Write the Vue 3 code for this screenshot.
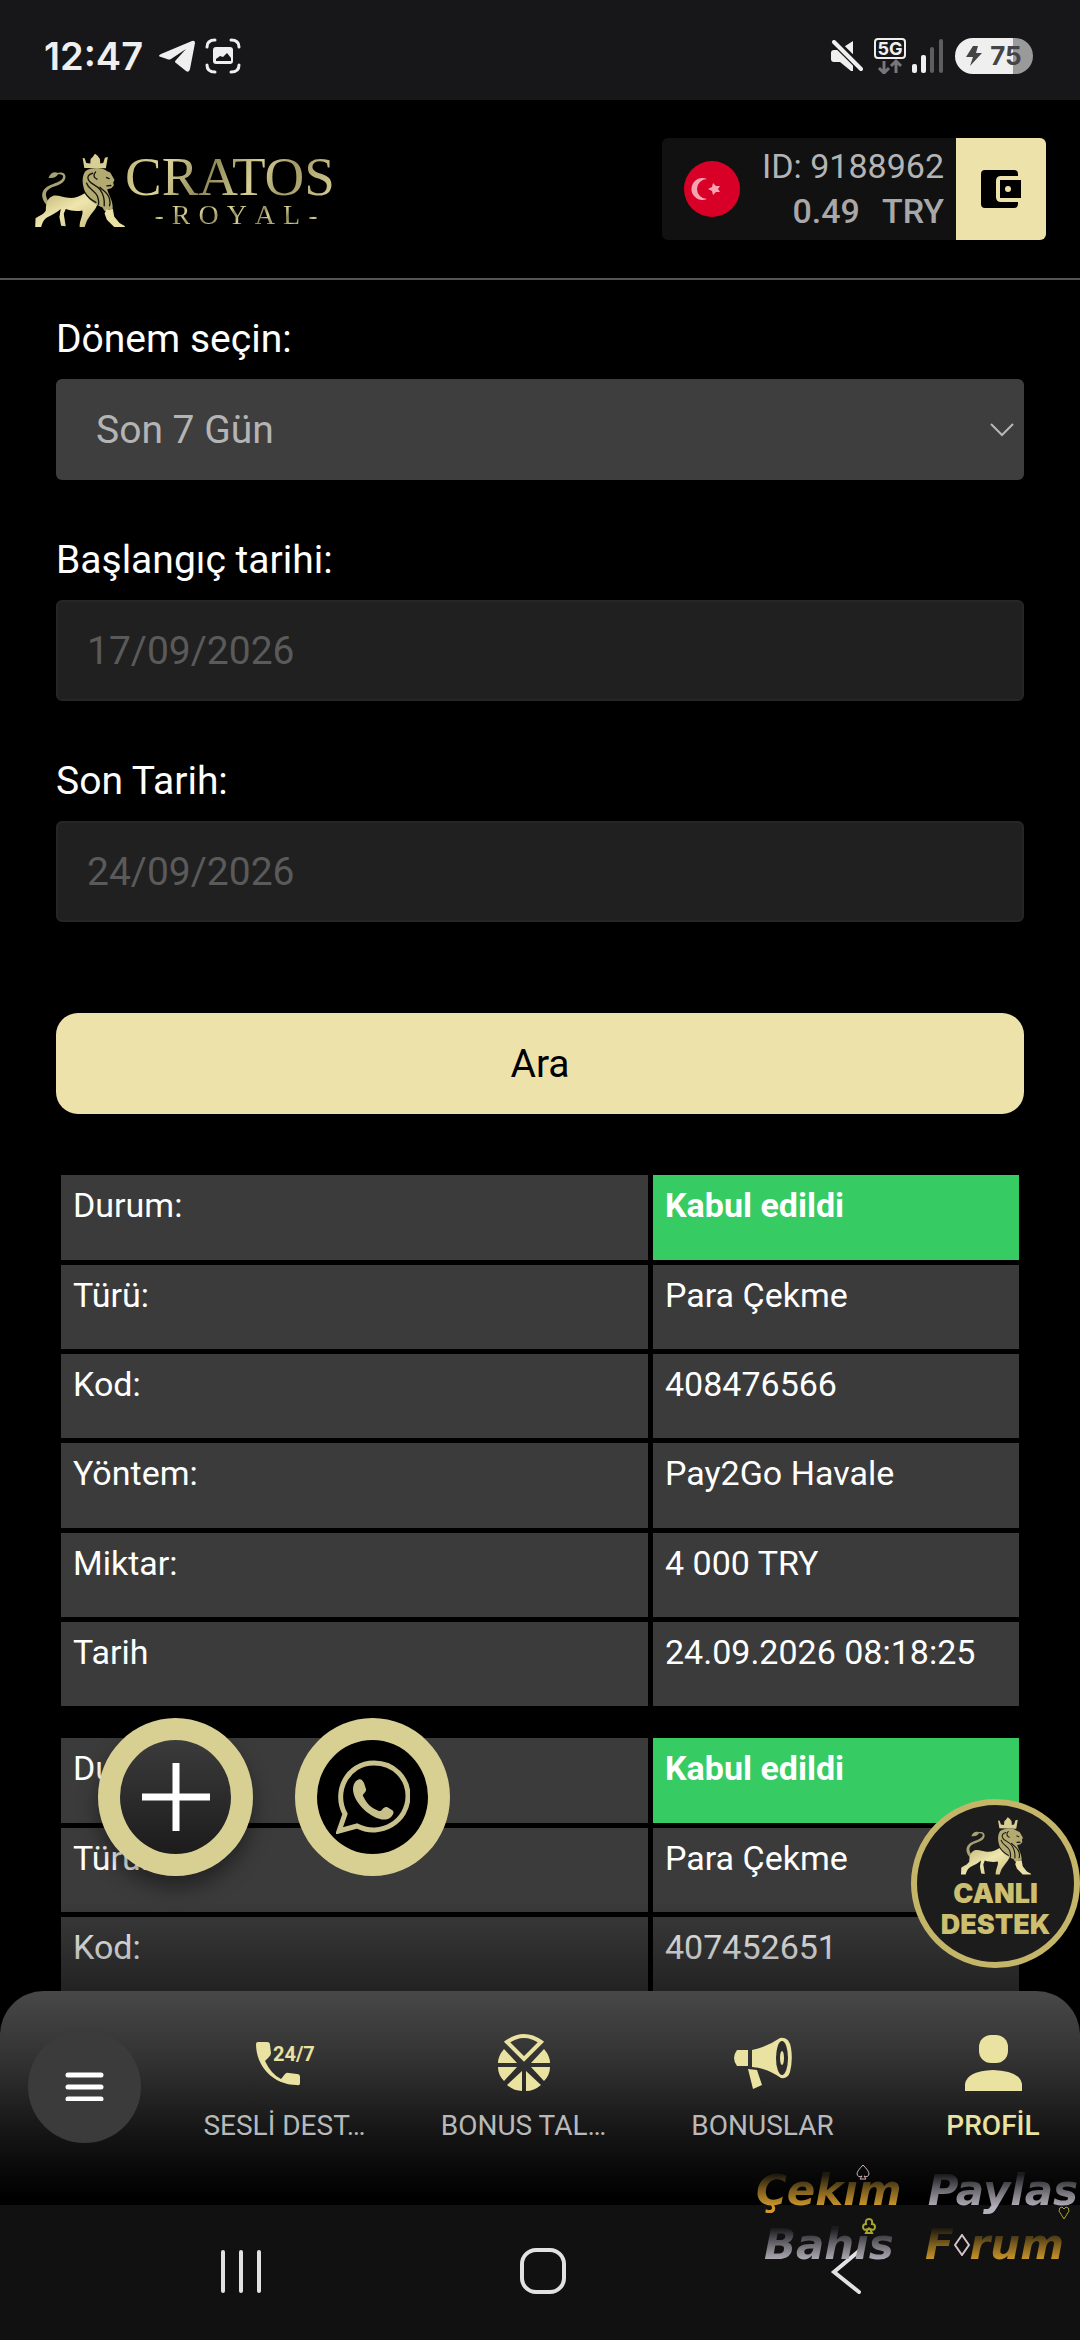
<template>
    <div class="page">
        <svg class="defs" aria-hidden="true">
            <defs>
                <symbol id="lion" viewBox="15 20 270 220">
                    <path d="M52 176c-12-10-20-28-14-42 7-18 28-22 44-29 10-4 17-10 17-17 0-6-7-7-15-7-5 8-13 13-29 11 5-14 16-20 29-15 14-4 24 3 22 15-3 16-22 21-36 27-16 6-25 15-22 28 2 9 6 16 12 21z" fill="#a8a174" />
                    <path d="M15 240l1-26c9-8 22-9 31-24 0-20 4-36 19-43 15-5 30 3 48 5 18 2 33-3 50-14l38 34c-4 15-16 24-25 39-7 9-10 20-13 29H149c-2-17 12-38 8-50-15 3-34 2-50-4l-6 14 6 38-14-2-5-26 4-24c-10 10-25 17-39 24-10 6-15 13-20 30z" fill="url(#gold)" />
                    <path d="M163 62l-5-30 6 1 5 14 12 2 1-14 7-7 6-9 8 6 7 10 1 14 9-2 5-16 9-2-6 34z" fill="#d9cf94" />
                    <path d="M166 72c16-12 50-14 66 0l9 4 13 22-4 8 2 9-8 8-12 3c4 18 20 38 16 61l-12-1-2 9-11-5-5-9c-22-8-46-22-53-48-8-20-11-43 1-61z" fill="#b3aa72" />
                    <path d="M229 188l20-2 4 22 16 20 16 9v3h-32l-22-22-7-19z" fill="#ebe1a5" />
                    <g fill="none" stroke="#14130d" stroke-width="4" stroke-linecap="round">
                        <path d="M188 78c-14 3-17 12-12 21 6 12 22 12 35 29 10 14 14 27 12 48" />
                        <path d="M170 108c6 19 25 21 33 40 3 9 4 17 3 25M210 120c9 10 25 17 29 35 2 9 2 15 0 21M197 74c-8 9-6 18 4 22M231 116l12-1M230 91l8 3M166 138c7 12 17 20 32 28" />
                    </g>
                </symbol>
                <linearGradient id="gold" x1="0" y1="0" x2="1" y2="1">
                    <stop offset="0" stop-color="#bcb273" />
                    <stop offset=".5" stop-color="#efe6ae" />
                    <stop offset="1" stop-color="#c9bf82" />
                </linearGradient>
            </defs>
        </svg>

        <div class="status-bar">
            <span class="clock">12:47</span>
            <svg class="status-telegram" viewBox="0 0 36 32" width="36" height="32">
                <path d="M2 14 33 1q3-1 3 2l-5 26q-1 4-4 2l-10-8q-2-1 0-3l10-11-15 10q-2 1-4 0l-6-2q-4-1 0-3z" fill="#efefef" />
            </svg>
            <svg viewBox="0 0 36 36" width="36" height="36">
                <g fill="none" stroke="#efefef" stroke-width="3" stroke-linecap="round">
                    <path d="M2 9q0-7 8-7M26 2q8 0 8 7M34 27q0 7-8 7M10 34q-8 0-8-7" />
                </g>
                <path d="M11 9h14q3 0 3 3v11q0 3-3 3H11q-3 0-3-3V12q0-3 3-3z" fill="#efefef" />
                <path d="M11 23v-2l4-3 3 1 4-4 4 5v3z" fill="#17171a" />
            </svg>
            <div class="status-right">
                <svg viewBox="0 0 32 32" width="32" height="32">
                    <path d="M3 10h5L22 1v30h-2L9 22H3q-3 0-3-3v-6q0-3 3-3z" fill="#efefef" />
                    <path d="M2 0 34 32" stroke="#17171a" stroke-width="8" />
                    <path d="M3 2 30 29" stroke="#efefef" stroke-width="4" stroke-linecap="round" />
                </svg>
                <div class="network">
                    <svg viewBox="0 0 32 36" width="32" height="36">
                        <rect x="1" y="1" width="30" height="19" rx="3" fill="none" stroke="#efefef" stroke-width="2" />
                        <text x="16" y="17" text-anchor="middle" class="net-text">5G</text>
                        <path d="M10 23v12M5 30l5 5 5-5M22 35V23M17 28l5-5 5 5" fill="none" stroke="#77777a" stroke-width="3" />
                    </svg>
                    <svg viewBox="0 0 32 34" width="32" height="34">
                        <rect x="0" y="25" width="5" height="9" rx="2" fill="#efefef" />
                        <rect x="9" y="16" width="5" height="18" rx="2" fill="#efefef" />
                        <rect x="18" y="8" width="4" height="26" rx="2" fill="#5e5e61" />
                        <rect x="27" y="0" width="4" height="34" rx="2" fill="#5e5e61" />
                    </svg>
                </div>
                <div class="battery">
                    <svg viewBox="0 0 16 20" width="16" height="20">
                        <path d="M7 0h5l-2 7h6L4 20l3-9H0z" fill="#444446" />
                    </svg>
                    <span>75</span>
                </div>
            </div>
        </div>

        <header class="header">
            <a href="#" class="logo" aria-label="Cratos Royal">
                <svg class="logo-lion" width="90" height="73"><use href="#lion" /></svg>
                <span class="logo-text">
                    <span class="logo-main">CRATOS</span>
                    <span class="logo-sub"><span v-for="(ch, i) in '-ROYAL-'" :key="i">{{ ch }}</span></span>
                </span>
            </a>
            <div class="account">
                <svg class="flag" viewBox="0 0 56 56" width="56" height="56">
                    <circle cx="28" cy="28" r="28" fill="#d80027" />
                    <path d="M23 18a11 11 0 1 0 0 20 10 10 0 0 1 0-20z" fill="#f6a3b2" />
                    <path d="m24 28 4-2 1-4 3 3 4 0-2 3 2 3-4 0-3 3-1-4z" fill="#f6a3b2" />
                </svg>
                <div class="account-info">
                    <span>ID: 9188962</span>
                    <span class="balance"><span>0.49</span><span>TRY</span></span>
                </div>
                <button type="button" class="wallet" aria-label="Cüzdan">
                    <svg viewBox="0 0 40 38" width="40" height="38">
                        <path d="M4 0h29q4 0 4 4v2H20q-5 0-5 5v16q0 5 5 5h17v2q0 4-4 4H4q-4 0-4-4V4q0-4 4-4z" />
                        <path d="M19 10h21v18H19z" />
                        <circle cx="27" cy="19" r="3" fill="#ede3aa" />
                    </svg>
                </button>
            </div>
        </header>

        <div class="body">
            <main class="content">
                <form @submit.prevent>
                    <div class="field">
                        <label for="period">Dönem seçin:</label>
                        <div class="select-wrap">
                            <select id="period" v-model="period">
                                <option>Son 7 Gün</option>
                            </select>
                            <svg class="arrow" viewBox="0 0 24 14" width="24" height="14">
                                <path d="m1 1 11 11L23 1" fill="none" stroke="#b8b8b8" stroke-width="2" />
                            </svg>
                        </div>
                    </div>
                    <div class="field">
                        <label for="from">Başlangıç tarihi:</label>
                        <input id="from" type="text" value="17/09/2026" disabled>
                    </div>
                    <div class="field">
                        <label for="to">Son Tarih:</label>
                        <input id="to" type="text" value="24/09/2026" disabled>
                    </div>
                    <button type="submit" class="search">Ara</button>
                </form>

                <table v-for="(item, i) in transactions" :key="i" class="record">
                    <tbody>
                        <tr v-for="row in item" :key="row.label">
                            <th scope="row">{{ row.label }}</th>
                            <td :class="{ accepted: row.accepted }">{{ row.value }}</td>
                        </tr>
                    </tbody>
                </table>
            </main>
            <div class="fade"></div>

            <div class="fabs">
                <button type="button" class="fab fab-plus" aria-label="Aç">
                    <svg viewBox="0 0 68 68" width="68" height="68">
                        <path d="M34 0v68M0 34h68" stroke="#fff" stroke-width="7" />
                    </svg>
                </button>
                <a href="#" class="fab fab-whatsapp" aria-label="WhatsApp">
                    <svg viewBox="0 0 74 74" width="74" height="74">
                        <path d="M3 71 9 54C-3 32 11 3 38 3c20 0 34 15 34 33 0 25-27 42-51 30z" fill="none" stroke="#c9c18b" stroke-width="5" />
                        <path d="M20 21c4-3 6-2 8 2l2 6c1 3-4 5-3 7 4 8 8 12 16 15 3 1 4-5 8-4l5 3c3 2 1 5-1 7-10 10-38-11-38-28 0-3 1-6 3-8z" fill="#c9c18b" />
                    </svg>
                </a>
            </div>

            <a href="#" class="support">
                <svg width="70" height="60"><use href="#lion" /></svg>
                <span>CANLI</span>
                <span>DESTEK</span>
            </a>
        </div>

        <nav class="tabbar">
            <button type="button" class="menu" aria-label="Menü">
                <svg viewBox="0 0 39 29" width="39" height="29">
                    <path d="M3 3h33M3 15h33M3 27h33" stroke="#fff" stroke-width="5" stroke-linecap="round" />
                </svg>
            </button>
            <div class="tabs">
                <a href="#" class="tab">
                    <svg viewBox="0 0 57 58" width="57" height="58">
                        <path d="M2 8h9q3 0 3 3l1 8q0 2-2 4l-4 4q6 13 16 18l4-5q2-2 4-1l8 1q3 0 3 3v6q0 3-3 2C17 51 0 32 0 10q0-2 2-2z" fill="#eae2a0" />
                        <text x="17" y="27" class="phone-text">24/7</text>
                    </svg>
                    <span>SESLİ DEST…</span>
                </a>
                <a href="#" class="tab">
                    <svg viewBox="0 0 52 58" width="52" height="58">
                        <path d="M9 8Q26-4 43 8L26 25z" fill="none" stroke="#eae2a0" stroke-width="4" />
                        <path d="M6 15 19 29H0Q0 22 6 15zM46 15Q52 22 52 29H33zM0 33h19L6 47Q0 41 0 33zM52 33q0 8-6 14L33 33zM24 37v20q-8 0-15-6zM28 37v20q8 0 15-6z" fill="#eae2a0" />
                    </svg>
                    <span>BONUS TAL…</span>
                </a>
                <a href="#" class="tab">
                    <svg viewBox="0 0 57 58" width="57" height="58">
                        <path d="M3 16h11v16H3q-6-8 0-16zM18 16Q33 13 46 4q9-2 11 10t-1 24q-2 7-9 6Q33 34 18 33z" fill="#eae2a0" />
                        <ellipse cx="48" cy="24" rx="6" ry="17" fill="#2c2c2c" />
                        <ellipse cx="48" cy="24" rx="2" ry="7" fill="#eae2a0" />
                        <path d="m14 35 9 1 5 15-9 4z" fill="#eae2a0" />
                    </svg>
                    <span>BONUSLAR</span>
                </a>
                <a href="#" class="tab active">
                    <svg viewBox="0 0 57 58" width="57" height="58">
                        <rect x="14" y="1" width="29" height="28" rx="12" fill="#eae2a0" />
                        <path d="M0 57v-7q2-13 28-14 27 1 29 14v7z" fill="#eae2a0" />
                    </svg>
                    <span>PROFİL</span>
                </a>
            </div>
        </nav>

        <div class="system-nav">
            <button type="button" aria-label="Son uygulamalar">
                <svg viewBox="0 0 46 46" width="46" height="46">
                    <path d="M5 4v39M23 4v39M41 4v39" stroke="#e2e2e2" stroke-width="4" stroke-linecap="round" />
                </svg>
            </button>
            <button type="button" aria-label="Ana ekran">
                <svg viewBox="0 0 46 46" width="46" height="46">
                    <rect x="2" y="2" width="42" height="42" rx="14" fill="none" stroke="#e2e2e2" stroke-width="4" />
                </svg>
            </button>
            <button type="button" aria-label="Geri">
                <svg viewBox="0 0 46 46" width="46" height="46">
                    <path d="M37 3 12 24l25 20" fill="none" stroke="#e2e2e2" stroke-width="4" stroke-linecap="round" />
                </svg>
            </button>
        </div>

        <div class="watermark">
            <div class="mark-line">
                <span class="mark gold">Çekım</span>
                <span class="mark silver">Paylas</span>
                <svg class="suit spade" viewBox="0 0 14 16" width="14" height="16">
                    <path d="M7 1Q1 7 1 10q1 4 5 2l-2 3h6l-2-3q4 2 5-2 0-3-6-9z" fill="none" stroke="#cdb5bd" />
                </svg>
                <svg class="suit heart" viewBox="0 0 12 14" width="12" height="14">
                    <path d="M6 13 1 5q0-4 3-4l2 2 2-2q3 0 3 4z" fill="none" stroke="#a7a52c" />
                </svg>
            </div>
            <div class="mark-line">
                <span class="mark silver">Bahıs</span>
                <span class="mark-forum">
                    <span class="mark gold">F</span>
                    <svg viewBox="0 0 16 22" width="16" height="22">
                        <path d="M8 1 15 11 8 21 1 11z" fill="none" stroke="#d4c3c8" stroke-width="2" />
                    </svg>
                    <span class="mark gold">rum</span>
                </span>
                <svg class="suit club" viewBox="0 0 14 16" width="14" height="16">
                    <path d="M6 11q-5 2-5-2 0-3 3-3-1-5 3-5t3 5q3 0 3 3 0 4-5 2l2 4H4z" fill="none" stroke="#a7a52c" stroke-width="2" />
                </svg>
            </div>
        </div>
    </div>
</template>

<script setup>
import { ref } from 'vue';

const period = ref('Son 7 Gün');

const transactions = [
    [
        { label: 'Durum:', value: 'Kabul edildi', accepted: true },
        { label: 'Türü:', value: 'Para Çekme' },
        { label: 'Kod:', value: '408476566' },
        { label: 'Yöntem:', value: 'Pay2Go Havale' },
        { label: 'Miktar:', value: '4 000 TRY' },
        { label: 'Tarih', value: '24.09.2026 08:18:25' }
    ],
    [
        { label: 'Durum:', value: 'Kabul edildi', accepted: true },
        { label: 'Türü:', value: 'Para Çekme' },
        { label: 'Kod:', value: '407452651' }
    ]
];
</script>

<style>
body {
    background: #000;
}
</style>

<style scoped>
.page {
    position: relative;
    display: flex;
    flex-direction: column;
    height: 100vh;
    overflow: hidden;
    background: #000;
    color: #fff;
    font-family: Roboto, "Noto Sans", sans-serif;
}

.page * {
    box-sizing: border-box;
}

svg {
    display: block;
    flex-shrink: 0;
}

button,
input,
select {
    margin: 0;
    padding: 0;
    border: 0;
    font-family: inherit;
}

a {
    color: inherit;
    text-decoration: none;
}

.defs {
    position: absolute;
    width: 0;
    height: 0;
}

/* status bar */
.status-bar {
    flex: none;
    display: flex;
    align-items: center;
    gap: 10px;
    height: 100px;
    padding: 12px 47px 0 44px;
    background: #17171a;
    color: #efefef;
}

.clock {
    margin-right: 6px;
    font: 600 38px/44px Inter, sans-serif;
}

.status-right {
    display: flex;
    align-items: center;
    gap: 11px;
    margin-left: auto;
}

.network {
    display: flex;
    align-items: center;
    gap: 6px;
}

.net-text {
    fill: #efefef;
    font: 700 18px Inter, sans-serif;
}

.battery {
    display: flex;
    align-items: center;
    justify-content: center;
    gap: 8px;
    width: 78px;
    height: 36px;
    border-radius: 18px;
    background: linear-gradient(90deg, #efefef 75%, #9a9a9b 75%);
    color: #444446;
    font: 700 26px/36px Inter, sans-serif;
}

/* header */
.header {
    flex: none;
    display: flex;
    align-items: center;
    justify-content: space-between;
    height: 180px;
    padding: 0 34px 0 35px;
    border-bottom: 2px solid #555;
}

.logo {
    display: flex;
    align-items: flex-end;
}

.logo-text {
    display: flex;
    flex-direction: column;
    align-items: center;
    font-family: "Liberation Serif", serif;
}

.logo-main,
.logo-sub span {
    background: linear-gradient(115deg, #bdb579, #ded59c 20%, #8f8857 40%, #d8cf97 60%, #a29a66 75%, #d8cf97);
    background-clip: text;
    color: transparent;
}

.logo-main {
    font-size: 55px;
    line-height: 52px;
}

.logo-sub {
    display: flex;
    gap: 8px;
    padding-left: 12px;
    font-size: 28px;
    line-height: 24px;
}

.account {
    display: flex;
    align-items: center;
    height: 102px;
    border-radius: 6px;
    overflow: hidden;
    background: #111;
}

.flag {
    margin: 0 22px;
}

.account-info {
    display: flex;
    flex-direction: column;
    align-items: flex-end;
    margin-right: 12px;
    color: #b4b4b4;
    font-size: 34px;
    line-height: 45px;
}

.balance {
    display: flex;
    gap: 22px;
    color: #a8a8a8;
    font-weight: 500;
}

.wallet {
    display: flex;
    align-items: center;
    justify-content: center;
    width: 90px;
    height: 102px;
    background: #ede3aa;
}

/* content */
.body {
    position: relative;
    flex: 1;
    min-height: 0;
}

.content {
    height: 100%;
    padding: 35px 56px 0;
    overflow: hidden;
}

.field {
    display: flex;
    flex-direction: column;
    gap: 16px;
    margin-bottom: 56px;
}

label {
    font-size: 39px;
    line-height: 48px;
}

.select-wrap {
    position: relative;
}

select,
input {
    width: 100%;
    height: 101px;
    border-radius: 6px;
    font-size: 39px;
}

select {
    display: block;
    padding: 0 40px;
    appearance: none;
    background: #3e3e3e;
    color: #b4b4b4;
}

.arrow {
    position: absolute;
    top: 44px;
    right: 10px;
    pointer-events: none;
}

input {
    padding: 0 29px;
    border: 2px solid #262626;
    background: #202020;
    color: #5a5a5a;
    opacity: 1;
}

.search {
    display: block;
    width: 100%;
    height: 101px;
    margin-top: 91px;
    border-radius: 22px;
    background: #ede3aa;
    color: #000;
    font-size: 39px;
}

.record {
    width: 100%;
    margin-top: 22px;
    border-spacing: 5px;
    table-layout: fixed;
    font-size: 34px;
    line-height: 40px;
}

form + .record {
    margin-top: 56px;
}

.record th,
.record td {
    height: 84px;
    padding: 10px 12px;
    background: #3b3b3b;
    font-weight: 400;
    text-align: left;
    vertical-align: top;
}

.record tr:nth-child(3n + 1) th {
    height: 85px;
}

.record td {
    width: 366px;
}

.record .accepted {
    background: #36cc63;
    font-weight: 700;
}

.fade {
    position: absolute;
    right: 0;
    bottom: 0;
    left: 0;
    height: 90px;
    background: linear-gradient(rgba(0, 0, 0, 0), rgba(0, 0, 0, 0.42));
    pointer-events: none;
}

/* floating buttons */
.fabs {
    position: absolute;
    bottom: 115px;
    left: 98px;
    display: flex;
    gap: 42px;
}

.fab {
    display: flex;
    align-items: center;
    justify-content: center;
    width: 155px;
    height: 158px;
    border: 22px solid #d8d092;
    border-radius: 50%;
}

.fab-plus {
    background: linear-gradient(#3b3b3b, #1c1c1c);
    box-shadow: 0 12px 20px rgba(0, 0, 0, 0.4);
}

.fab-whatsapp {
    background: #000;
}

.support {
    position: absolute;
    right: 0;
    bottom: 23px;
    display: flex;
    flex-direction: column;
    align-items: center;
    width: 169px;
    height: 169px;
    padding-top: 11px;
    border: 6px solid #c5b568;
    border-radius: 50%;
    background: #1c1c1c;
    color: #cdbf70;
    font: 900 27px/31px Inter, sans-serif;
}

.support svg {
    margin-bottom: 2px;
}

/* bottom tabs */
.tabbar {
    flex: none;
    display: flex;
    align-items: center;
    height: 214px;
    padding-left: 28px;
    border-radius: 44px 44px 0 0;
    background: linear-gradient(#484848, #303030 35%, #161616 65%, #000 97%);
}

.menu {
    display: flex;
    flex: none;
    align-items: center;
    justify-content: center;
    width: 113px;
    height: 113px;
    margin: 0 24px 24px 0;
    border-radius: 50%;
    background: #3b3b3b;
}

.tabs {
    flex: 1;
    display: grid;
    grid-template-columns: 239fr 239fr 239fr 198fr;
    padding-bottom: 20px;
}

.tab {
    display: flex;
    flex-direction: column;
    align-items: center;
    gap: 17px;
    color: #b9b9b9;
    font-size: 28px;
    line-height: 34px;
    white-space: nowrap;
}

.tab.active {
    padding-left: 24px;
    color: #eae2a0;
    font-weight: 500;
}

.tab svg {
    overflow: visible;
}

.phone-text {
    fill: #eae2a0;
    font: 700 20px Roboto, sans-serif;
}

/* android buttons */
.system-nav {
    flex: none;
    display: flex;
    justify-content: center;
    gap: 256px;
    height: 135px;
    padding: 43px 0 0 6px;
    background: #111;
}

.system-nav button {
    width: 46px;
    height: 46px;
    background: none;
}

/* watermark */
.watermark {
    position: absolute;
    right: 2px;
    bottom: 68px;
    width: 322px;
    pointer-events: none;
    font: italic 700 42px/54px "DejaVu Sans", sans-serif;
}

.mark-line {
    position: relative;
    display: flex;
    justify-content: space-between;
}

.mark-line + .mark-line {
    padding: 0 14px 0 8px;
}

.mark {
    color: transparent;
    background-clip: text;
}

.gold {
    background-image: linear-gradient(#1e1a10 20%, #7f601f 50%, #d39a2b 80%);
}

.silver {
    background-image: linear-gradient(#1c1c1f 20%, #6f6d74 50%, #b5b0bb 80%);
}

.mark-forum {
    display: flex;
    align-items: center;
}

.suit {
    position: absolute;
}

.spade {
    top: 0;
    left: 100px;
}

.heart {
    top: 42px;
    right: 8px;
}

.club {
    top: 0;
    left: 106px;
}
</style>
